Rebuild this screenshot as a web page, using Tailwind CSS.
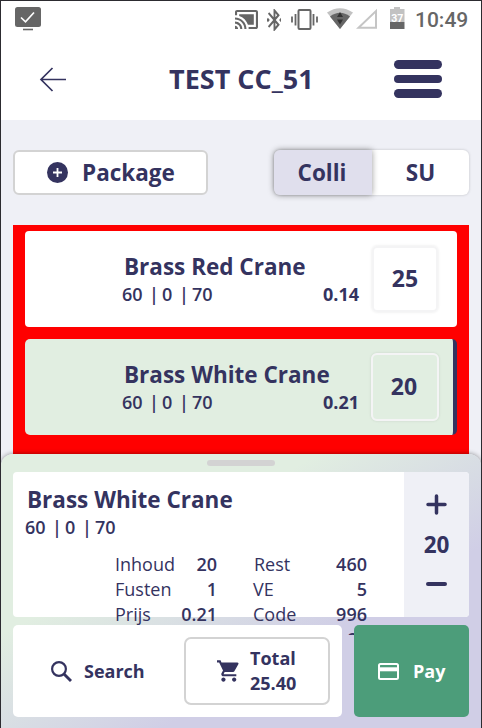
<!DOCTYPE html>
<html lang="en">
<head>
<meta charset="utf-8">
<title>TEST CC_51</title>
<script src="https://cdn.jsdelivr.net/npm/@tailwindcss/browser@4"></script>
</head>
<body class="w-[482px] h-[728px] overflow-hidden font-['Open_Sans',sans-serif] text-[#34335f]">
<div class="relative flex h-[728px] w-[482px] flex-col overflow-hidden border-x border-t border-[#2c2b30] bg-[#eff0f6]">
  <div class="flex h-[37px] shrink-0 items-start bg-white">
    <svg class="ml-[14px] mt-[6px]" width="26" height="24" viewBox="0 0 26 24"><rect width="26" height="20" rx="2.5" fill="#666"/><path d="M6 10.500l4.500 4.300L19 5.500" fill="none" stroke="#fff" stroke-width="1.700"/><path d="M8 22.500h10" stroke="#666" stroke-width="1.600"/></svg>
    <svg class="ml-[194px] mt-[9px]" width="23" height="19" viewBox="1 3 22 18" fill="#666" preserveAspectRatio="none"><path d="M1 18v3h3c0-1.660-1.340-3-3-3zm0-4v2c2.760 0 5 2.240 5 5h2c0-3.870-3.130-7-7-7zm18-7H5v1.630c3.960 1.280 7.090 4.410 8.370 8.370H19V7zM1 10v2c4.970 0 9 4.030 9 9h2c0-6.080-4.930-11-11-11zm20-7H3c-1.100 0-2 .9-2 2v3h2V5h18v14h-7v2h7c1.100 0 2-.9 2-2V5c0-1.100-.9-2-2-2z"/></svg>
    <svg class="ml-[9px] mt-[8px]" width="14" height="22" viewBox="4 2 15 20" fill="#666" preserveAspectRatio="none"><path d="M7 12l-2-2-2 2 2 2 2-2zm10.710-4.290L12 2h-1v7.590L6.410 5 5 6.410 10.590 12 5 17.590 6.410 19 11 14.410V22h1l5.710-5.710-4.300-4.290 4.300-4.290zM13 5.830l1.880 1.880L13 9.590V5.830zm1.880 10.460L13 18.170v-3.760l1.880 1.880zM19 10l-2 2 2 2 2-2-2-2z"/></svg>
    <svg class="ml-[10px] mt-[8px]" width="27" height="21" viewBox="0 0 27 21" fill="none" stroke="#666" stroke-width="2"><rect x="7.500" y="1" width="12" height="19" rx="1"/><path d="M1 7.500v6M4.500 5v11.500M22.500 5v11.500M26 7.500v6" stroke-width="1.800"/></svg>
    <svg class="ml-[9px] mt-[7px]" width="26" height="21" viewBox="0 0 26 21"><path d="M0 4.500Q13-4 26 4.500L13 21z" fill="#c2c2c2"/><path d="M3 8.500Q13 1 23 8.500L13 21z" fill="#666"/><path d="M13 4l3 5h-6zM10 11.500h6l-3 5z" fill="#333"/></svg>
    <svg class="ml-[3px] mt-[7px]" width="22" height="21" viewBox="0 0 22 21"><path d="M2.500 19.800H20V3z" fill="none" stroke="#c5c5c5" stroke-width="2"/></svg>
    <svg class="ml-[12px] mt-[6px]" width="15" height="22" viewBox="0 0 15 22"><path d="M4 0h6v2h4.500v13H0V2h4z" fill="#c2c2c2"/><path d="M0 15h14.500v7H0z" fill="#666"/><text x="7.300" y="14.500" text-anchor="middle" font-family="Roboto" font-weight="700" font-size="10.500" fill="#fff">37</text></svg>
    <span class="ml-[10px] mt-[6px] font-[Roboto,sans-serif] text-[21px] leading-[26px] font-medium text-[#666]">10:49</span>
  </div>
  <header class="flex h-[82px] shrink-0 items-start bg-white">
    <svg class="ml-[38px] mt-[29px]" width="28" height="25" viewBox="0 0 28 25" fill="none" stroke="#34335f" stroke-width="1.700"><path d="M13.500 1L2 12.500 13.500 24M2 12.500H27"/></svg>
    <h1 class="ml-[102px] mt-[23px] w-[225px] text-[27px] leading-[36px] font-bold whitespace-nowrap">TEST CC_51</h1>
    <div class="mt-[22px] flex flex-col gap-[6px]"><i class="h-[8.500px] w-[48px] rounded-full bg-[#34335f]"></i><i class="h-[8.500px] w-[48px] rounded-full bg-[#34335f]"></i><i class="h-[8.500px] w-[48px] rounded-full bg-[#34335f]"></i></div>
  </header>
  <div class="mx-3 mt-[30px] flex h-[45px] shrink-0 justify-between">
    <button class="flex w-[195px] items-center rounded-[6px] border-2 border-[#d3d3d3] bg-white pl-8">
      <svg width="21" height="21" viewBox="0 0 21 21"><circle cx="10.500" cy="10.500" r="10.500" fill="#34335f"/><path d="M10.500 6v9M6 10.500h9" stroke="#fff" stroke-width="1.800"/></svg>
      <span class="ml-[14px] text-[22.500px] leading-[30px] font-bold">Package</span>
    </button>
    <div class="flex w-[195px] rounded-[6px] bg-white text-center text-[22.500px] leading-[45px] font-bold shadow-[0_0_3px_rgba(0,0,0,0.2)]">
      <div class="w-[98px] rounded-l-[6px] bg-[#e0dfed] pr-[2px] shadow-[0_0_6px_rgba(0,0,0,0.4)]">Colli</div><div class="w-[97px]">SU</div>
    </div>
  </div>
  <main class="mx-3 mt-[30px] flex h-[260px] shrink-0 flex-col gap-3 bg-[#f00] px-3 pt-[6px]">
    <div class="flex h-24 rounded-[4px] bg-white">
      <div class="ml-[97px] mt-[20px] w-[237px]">
        <div class="ml-[2px] text-[22.500px] leading-[31px] font-bold whitespace-nowrap">Brass Red Crane</div>
        <div class="flex justify-between text-[18px] leading-[25px] font-semibold"><span class="flex"><span class="w-[27px]">60</span><span class="w-[13px]">|</span><span class="w-[17px]">0</span><span class="w-[13px]">|</span><span>70</span></span><span class="font-bold">0.14</span></div>
      </div>
      <div class="ml-[13px] mt-[15px] size-[66px] rounded-[5px] border-2 border-[#f4f4f5] text-center text-[23px] leading-[61px] font-bold shadow-[0_0_3px_rgba(0,0,0,0.1)]">25</div>
    </div>
    <div class="flex h-24 rounded-[5px] border-r-4 border-[#34335f] bg-[#e1eee1]">
      <div class="ml-[97px] mt-[20px] w-[237px] shrink-0">
        <div class="ml-[2px] text-[22.500px] leading-[31px] font-bold whitespace-nowrap">Brass White Crane</div>
        <div class="flex justify-between text-[18px] leading-[25px] font-semibold"><span class="flex"><span class="w-[27px]">60</span><span class="w-[13px]">|</span><span class="w-[17px]">0</span><span class="w-[13px]">|</span><span>70</span></span><span class="font-bold">0.21</span></div>
      </div>
      <div class="ml-[12px] mt-[14px] size-[68px] shrink-0 rounded-[6px] border-2 border-[#f4f4f5] pr-[2px] text-center text-[23px] leading-[63px] font-bold shadow-[0_0_3px_rgba(0,0,0,0.1)]">20</div>
    </div>
  </main>
  <section class="absolute inset-x-0 top-[453px] h-[274px] rounded-t-[12px] bg-[linear-gradient(to_bottom_right,#e1eee1_33%,#d0cee6_67%)] px-3 shadow-[0_0_5px_rgba(0,0,0,0.45)]">
    <div class="mx-auto h-[18px] w-[68px] pt-[6px]"><div class="h-[6px] rounded-full bg-[#d3d3d3]"></div></div>
    <div class="flex h-[145px] rounded-[4px] bg-white">
      <div class="h-[163px] w-[391px] overflow-hidden pl-3 pt-3">
        <div class="ml-[2px] text-[22.500px] leading-[31px] font-bold">Brass White Crane</div>
        <div class="flex text-[18px] leading-[25px] font-semibold"><span class="w-[27px]">60</span><span class="w-[13px]">|</span><span class="w-[17px]">0</span><span class="w-[13px]">|</span><span>70</span></div>
        <div class="ml-[90px] mt-[12px] grid grid-cols-[59px_43px_36px_114px] text-[18px] leading-[25px]">
          <span>Inhoud</span><b class="text-right font-semibold">20</b><i></i><span class="grid grid-cols-[1fr_auto] pl-[1px]"><span>Rest</span><b class="font-semibold">460</b></span>
          <span>Fusten</span><b class="text-right font-semibold">1</b><i></i><span class="grid grid-cols-[1fr_auto]"><span>VE</span><b class="font-semibold">5</b></span>
          <span>Prijs</span><b class="text-right font-semibold">0.21</b><i></i><span class="grid grid-cols-[1fr_auto]"><span>Code</span><b class="font-semibold">996</b></span>
          <i></i><i></i><i></i><span class="pr-[9px] text-right font-semibold">2</span>
        </div>
      </div>
      <div class="flex w-[65px] flex-col items-center rounded-r-[4px] bg-[#eff0f6]">
        <svg class="mt-[22px]" width="21" height="21" viewBox="0 0 21 21" stroke="#34335f" stroke-width="3.500" stroke-linecap="round"><path d="M10.500 2v17M2 10.500h17"/></svg>
        <div class="mt-[14px] text-[22.500px] leading-[31px] font-bold">20</div>
        <div class="mt-[22px] h-[4px] w-[21px] rounded-full bg-[#34335f]"></div>
      </div>
    </div>
    <div class="relative mt-2 flex h-[92px] text-[18px] font-bold">
      <div class="flex w-[329px] items-center rounded-[5px] bg-white pl-[38px]">
        <svg width="21" height="21" viewBox="0 0 21 21" fill="none" stroke="#34335f"><circle cx="8" cy="8" r="6.900" stroke-width="2.200"/><path d="M13 13l7 7" stroke-width="2.900"/></svg>
        <span class="ml-[12px] w-[100px]">Search</span>
        <div class="flex h-[68px] w-[146px] items-center rounded-[7px] border-2 border-[#d3d3d3] pl-[31px]">
          <svg width="22" height="22" viewBox="1 2 20.500 20" fill="#34335f"><path d="M7 18c-1.100 0-2 .9-2 2s.9 2 2 2 2-.9 2-2-.9-2-2-2zM1 2v2h2l3.600 7.600L5.200 14c-.1.300-.2.600-.2 1 0 1.100.9 2 2 2h12v-2H7.400c-.1 0-.2-.1-.2-.2l.9-1.800h7.500c.7 0 1.400-.4 1.700-1L21 5.500c.3-.8-.2-1.500-1-1.500H5.200L4.300 2H1zm16 16c-1.100 0-2 .9-2 2s.9 2 2 2 2-.9 2-2-.9-2-2-2z"/></svg>
          <div class="ml-[11px] leading-[25px]"><div>Total</div><div>25.40</div></div>
        </div>
      </div>
      <button class="ml-[12px] flex w-[115px] items-center rounded-[5px] bg-[#4c9d7a] pl-6 text-white">
        <svg width="21" height="17" viewBox="0 0 21 17" fill="none" stroke="#fff"><rect x="1" y="1" width="19" height="15" rx="1.500" stroke-width="2"/><path d="M1 6.300h19" stroke-width="4"/></svg>
        <span class="ml-[14px]">Pay</span>
      </button>
    </div>
  </section>
</div>
</body>
</html>
